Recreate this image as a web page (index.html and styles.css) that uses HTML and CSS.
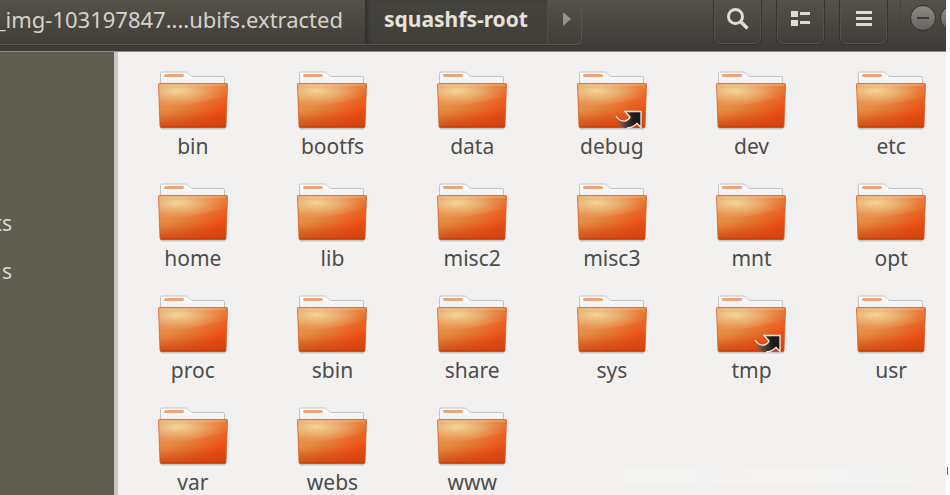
FILE: index.html
```
<!DOCTYPE html>
<html lang="en">
<head>
    <meta charset="utf-8">
    <title>squashfs-root</title>
    <link rel="stylesheet" href="styles.css">
</head>
<body>
    <!-- Shared icons -->
    <svg class="sprite" width="0" height="0" aria-hidden="true">
        <defs>
            <linearGradient id="front" x1="0" y1="0" x2="1" y2="1">
                <stop offset="0" stop-color="#e99a5c"/>
                <stop offset="0.4" stop-color="#e48a3f"/>
                <stop offset="0.78" stop-color="#ea5014"/>
                <stop offset="1" stop-color="#dd4813"/>
            </linearGradient>
            <radialGradient id="glow" cx="0.27" cy="0.3" r="0.72">
                <stop offset="0" stop-color="#f5d59c"/>
                <stop offset="0.5" stop-color="#ecb477" stop-opacity="0.75"/>
                <stop offset="1" stop-color="#ee8450" stop-opacity="0.2"/>
            </radialGradient>
            <linearGradient id="base" x1="0" y1="0" x2="0" y2="1">
                <stop offset="0.6" stop-color="#cf4410" stop-opacity="0"/>
                <stop offset="1" stop-color="#cb3f0e" stop-opacity="0.75"/>
            </linearGradient>
            <linearGradient id="paper" x1="0" y1="0" x2="0" y2="1">
                <stop offset="0" stop-color="#ffffff"/>
                <stop offset="1" stop-color="#ececec"/>
            </linearGradient>
            <linearGradient id="tail" x1="0" y1="0" x2="1" y2="0">
                <stop offset="0" stop-color="#b06a4a"/>
                <stop offset="0.35" stop-color="#5b4138"/>
                <stop offset="0.7" stop-color="#1c1a1a"/>
            </linearGradient>
        </defs>
        <symbol id="folder" viewBox="0 0 72 62">
            <path d="M3 57h66l-1 2.500H4z" fill="#000" opacity="0.18"/>
            <path d="M3.500 16V3.500q0-1.500 1.500-1.500h23q2 0 3 1.500l2 2q1 1 3 1h30q1.500 0 1.500 1.500v8z" fill="url(#paper)" stroke="#c3c3c3"/>
            <rect x="7" y="4" width="20" height="3" rx="1.500" fill="#f0a478"/>
            <path d="M1.500 14.500q0-1 1-1h67q1 0 1 1L69 56.500q0 1-1.500 1H4.500q-1.500 0-1.500-1z" fill="url(#front)"/>
            <path d="M2 14h68v11Q48 34 2 37z" fill="url(#glow)"/>
            <path d="M1.500 14.500q0-1 1-1h67q1 0 1 1L69 56.500q0 1-1.500 1H4.500q-1.500 0-1.500-1z" fill="url(#base)" stroke="#d4551f" stroke-opacity="0.7"/>
            <path d="M3 15h66" stroke="#f7c7a0" opacity="0.6"/>
            <path d="M4 57h64" stroke="#b93a0c" opacity="0.7"/>
        </symbol>
        <symbol id="link" viewBox="0 0 72 62">
            <path d="M49 41.500h16V57.500l-4-4Q56 58 50 58 41 57 40 46q4 6 9 5 4-1 5-4z" fill="url(#tail)"/>
            <path d="M40 46q4 6 9 5 4-1 5-4L49 41.500h16V57.500l-4-4Q56 58 51 58" fill="none" stroke="#f6ede6" stroke-width="1.300"/>
        </symbol>
    </svg>

    <div class="window">
        <header class="toolbar">
            <nav class="path">
                <button class="crumb" type="button">_img-103197847....ubifs.extracted</button>
                <button class="crumb current" type="button">squashfs-root</button>
                <button class="next" type="button" aria-label="Next folder">
                    <svg width="10" height="16" viewBox="0 0 10 16"><path d="M1 1l8 7-8 7z" fill="#96938d"/></svg>
                </button>
            </nav>
            <div class="tools">
                <button class="tool" type="button" aria-label="Search">
                    <svg width="24" height="24" viewBox="0 0 24 24" fill="none" stroke="#dfdbd2"><circle cx="9.500" cy="10.500" r="7" stroke-width="3"/><path d="M14.500 15.500l7 7" stroke-width="3.500"/></svg>
                </button>
                <button class="tool" type="button" aria-label="View as list">
                    <svg width="24" height="24" viewBox="0 0 24 24" fill="#dfdbd2"><path d="M2 5h7v6H2zM2 14h7v6H2zM11 6h10v3H11zM11 15h10v3H11z"/></svg>
                </button>
                <button class="tool" type="button" aria-label="Menu">
                    <svg width="24" height="24" viewBox="0 0 24 24" fill="#dfdbd2"><path d="M4 5h16v3H4zM4 11h16v3H4zM4 17h16v3H4z"/></svg>
                </button>
            </div>
            <div class="controls">
                <button class="round" type="button" aria-label="Minimize">
                    <svg width="14" height="4" viewBox="0 0 14 4"><path d="M1 2h12" stroke="#3c3b37" stroke-width="2"/></svg>
                </button>
                <button class="round" type="button" aria-label="Maximize"></button>
            </div>
        </header>

        <div class="content">
            <aside class="sidebar">
                <a href="#">ts</a>
                <a href="#">s</a>
            </aside>
            <main class="files">
                <div class="grid">
                    <a class="file" href="#"><svg class="icon"><use href="#folder"/></svg>bin</a>
                    <a class="file" href="#"><svg class="icon"><use href="#folder"/></svg>bootfs</a>
                    <a class="file" href="#"><svg class="icon"><use href="#folder"/></svg>data</a>
                    <a class="file" href="#"><svg class="icon"><use href="#folder"/><use href="#link"/></svg>debug</a>
                    <a class="file" href="#"><svg class="icon"><use href="#folder"/></svg>dev</a>
                    <a class="file" href="#"><svg class="icon"><use href="#folder"/></svg>etc</a>
                    <a class="file" href="#"><svg class="icon"><use href="#folder"/></svg>home</a>
                    <a class="file" href="#"><svg class="icon"><use href="#folder"/></svg>lib</a>
                    <a class="file" href="#"><svg class="icon"><use href="#folder"/></svg>misc2</a>
                    <a class="file" href="#"><svg class="icon"><use href="#folder"/></svg>misc3</a>
                    <a class="file" href="#"><svg class="icon"><use href="#folder"/></svg>mnt</a>
                    <a class="file" href="#"><svg class="icon"><use href="#folder"/></svg>opt</a>
                    <a class="file" href="#"><svg class="icon"><use href="#folder"/></svg>proc</a>
                    <a class="file" href="#"><svg class="icon"><use href="#folder"/></svg>sbin</a>
                    <a class="file" href="#"><svg class="icon"><use href="#folder"/></svg>share</a>
                    <a class="file" href="#"><svg class="icon"><use href="#folder"/></svg>sys</a>
                    <a class="file" href="#"><svg class="icon"><use href="#folder"/><use href="#link"/></svg>tmp</a>
                    <a class="file" href="#"><svg class="icon"><use href="#folder"/></svg>usr</a>
                    <a class="file" href="#"><svg class="icon"><use href="#folder"/></svg>var</a>
                    <a class="file" href="#"><svg class="icon"><use href="#folder"/></svg>webs</a>
                    <a class="file" href="#"><svg class="icon"><use href="#folder"/></svg>www</a>
                </div>
                <div class="smudge"></div>
            </main>
        </div>
    </div>
    <div class="mark"></div>
</body>
</html>
```
FILE: styles.css
```
* {
    box-sizing: border-box;
}

body {
    margin: 0;
    background-color: #fdfdfd;
    font-family: "Noto Sans", sans-serif;
    font-size: 21px;
    overflow: hidden;
}

button {
    padding: 0;
    border: none;
    background: none;
    font: inherit;
    cursor: pointer;
}

a {
    text-decoration: none;
}

.sprite {
    position: absolute;
}

.window {
    display: flex;
    flex-direction: column;
    height: 100vh;
    margin-right: 4px;
    overflow: hidden;
}

/* Toolbar */
.toolbar {
    display: flex;
    flex: none;
    height: 52px;
    padding-bottom: 6px;
    overflow: hidden;
    background: linear-gradient(#555149, #3c3b37);
    border-bottom: 1px solid #8d8c88;
}

.path {
    display: flex;
    border-bottom: 1px solid #57554e;
    border-right: 1px solid #57554e;
    border-bottom-right-radius: 6px;
    box-shadow: 0 1px 0 #35342f;
}

.crumb {
    display: flex;
    justify-content: flex-end;
    width: 365px;
    padding: 4px 22px 0 0;
    font-size: 22px;
    line-height: 30px;
    color: #d6d2c9;
    white-space: nowrap;
}

.current {
    justify-content: center;
    width: 183px;
    padding-right: 0;
    background: linear-gradient(#45433d, #403f3a);
    border-right: 1px solid #4f4d46;
    box-shadow: inset 4px 0 4px -2px #2d2c28;
    font-size: 21px;
    font-weight: bold;
    color: #e6e2da;
}

.next {
    display: flex;
    justify-content: center;
    width: 33px;
    padding: 11px 0 0 4px;
    line-height: 0;
}

.tools {
    display: flex;
    gap: 14px;
    margin-left: auto;
    padding-right: 12px;
}

.tool {
    display: flex;
    justify-content: center;
    width: 49px;
    padding-top: 6px;
    border: 1px solid #35342f;
    border-top: none;
    border-radius: 0 0 7px 7px;
    box-shadow: inset 0 0 0 1px #55524b;
}

.controls {
    display: flex;
    gap: 4px;
    width: 46px;
    padding: 5px 0 0 9px;
    border-left: 1px solid #45433d;
}

.round {
    display: flex;
    flex: none;
    align-items: center;
    justify-content: center;
    width: 26px;
    height: 26px;
    border: 1px solid #32312d;
    border-radius: 50%;
    background: linear-gradient(#8b8a84, #65645f);
}

/* Places and files */
.content {
    display: flex;
    flex: 1;
    min-height: 0;
}

.sidebar {
    display: flex;
    flex: none;
    flex-direction: column;
    gap: 18px;
    width: 118px;
    padding-top: 156px;
    background-color: #605d51;
    border-right: 4px solid #c9c7c4;
}

.sidebar a {
    display: flex;
    justify-content: flex-end;
    width: 12px;
    line-height: 30px;
    color: #dcd9d2;
}

.files {
    position: relative;
    flex: 1;
    min-width: 0;
    overflow: hidden;
    background-color: #f2f1ef;
}

/* The last column runs under the window edge */
.grid {
    display: grid;
    grid-template-columns: repeat(6, 1fr);
    grid-auto-rows: 112px;
    margin-right: -15px;
    padding: 18px 0 0 5px;
}

.file {
    display: flex;
    flex-direction: column;
    align-items: center;
    line-height: 28px;
    color: #4c4c4c;
}

.icon {
    width: 72px;
    height: 62px;
}

.smudge {
    position: absolute;
    right: 35px;
    bottom: 11px;
    width: 288px;
    height: 18px;
    background: linear-gradient(90deg, #f4f5f2 25%, #f1f1f1 26%, #f4f3f1 32%, #f5f4f2 70%, #f3f3f4 80%, #f4f3f1);
}

.mark {
    position: absolute;
    right: 2px;
    bottom: 20px;
    width: 1px;
    height: 8px;
    background-color: #6a6a6a;
}
```
